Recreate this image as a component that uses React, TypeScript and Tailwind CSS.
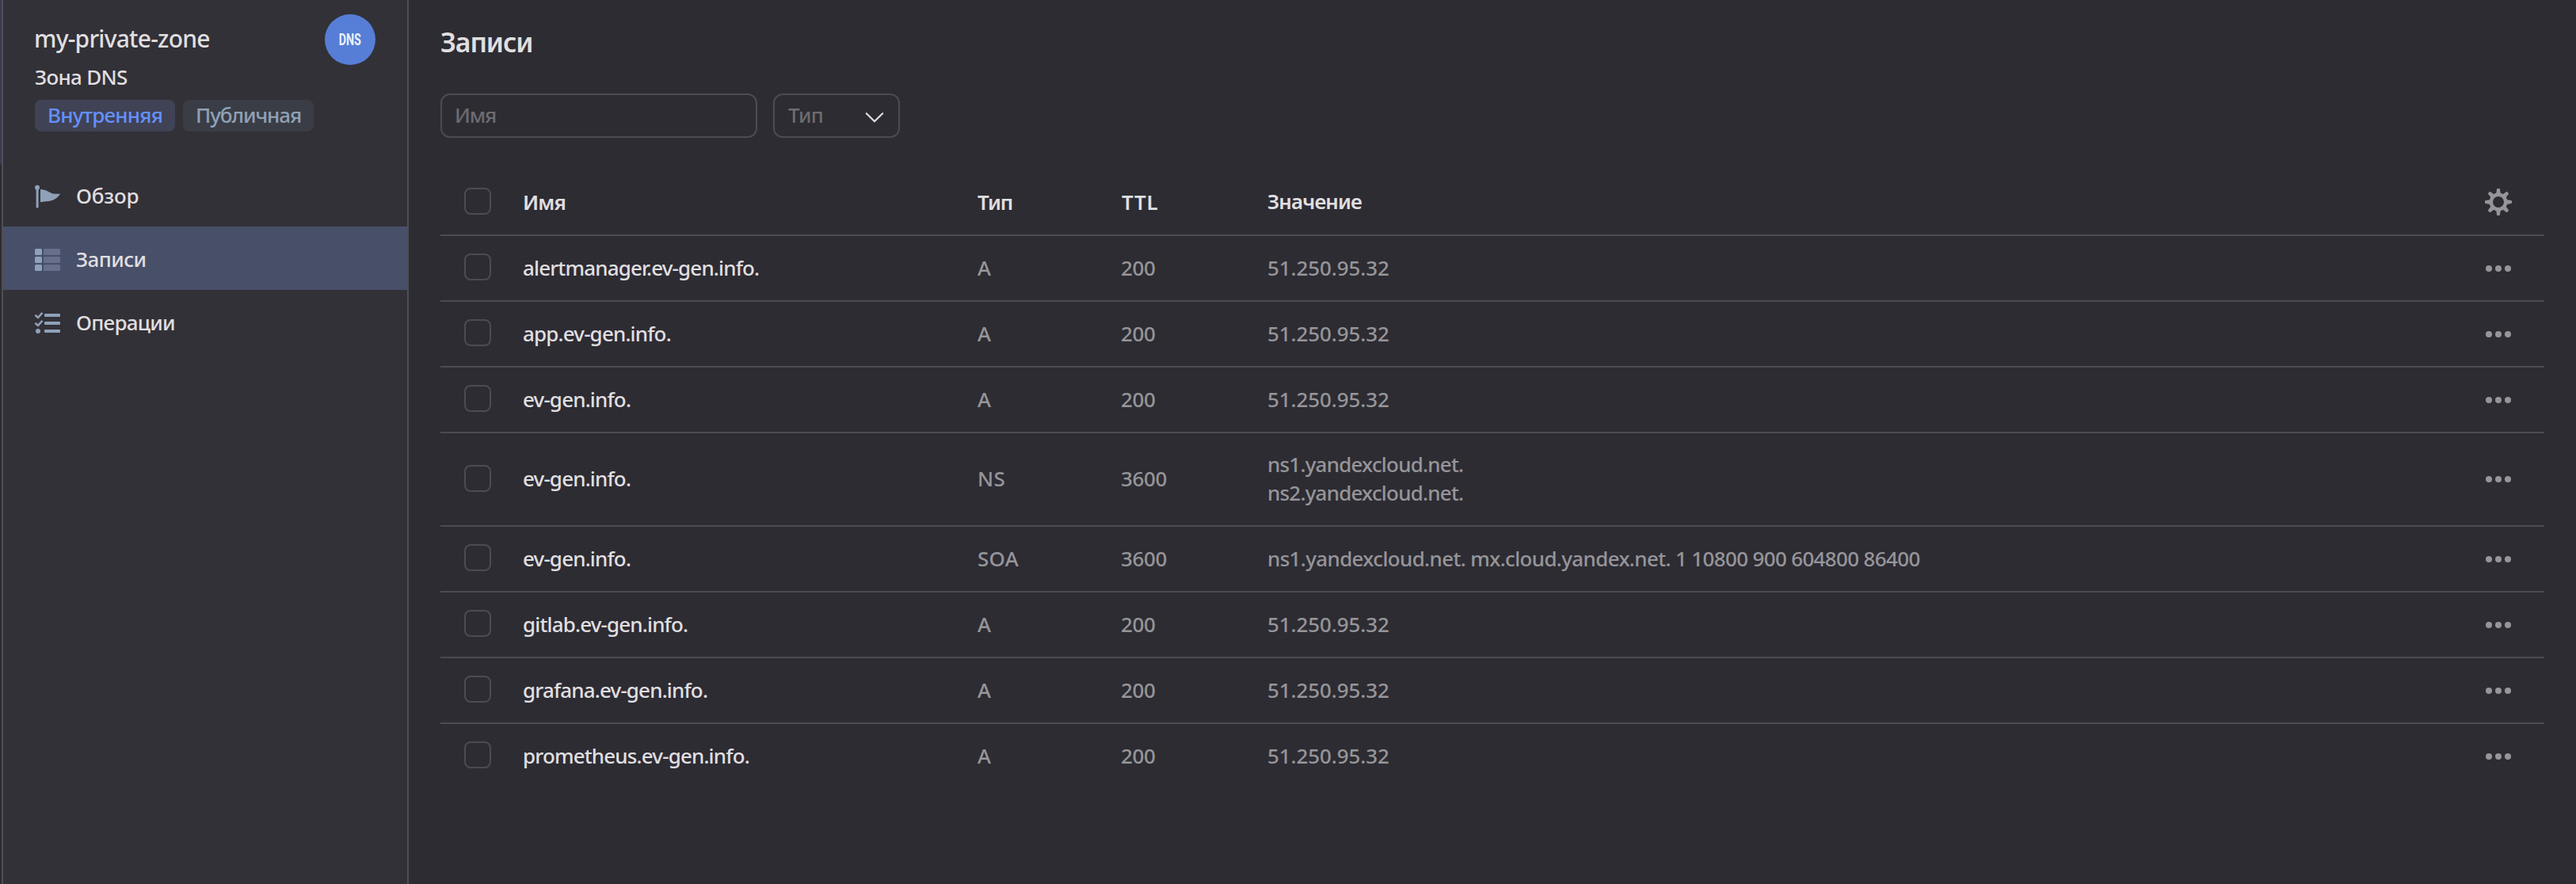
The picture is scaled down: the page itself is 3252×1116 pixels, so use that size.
import React from 'react';

type Row = { name: string; type: string; ttl: number; values: string[]; tracking?: string };

const rows: Row[] = [
  { name: 'alertmanager.ev-gen.info.', type: 'A', ttl: 200, values: ['51.250.95.32'] },
  { name: 'app.ev-gen.info.', type: 'A', ttl: 200, values: ['51.250.95.32'] },
  { name: 'ev-gen.info.', type: 'A', ttl: 200, values: ['51.250.95.32'] },
  { name: 'ev-gen.info.', type: 'NS', ttl: 3600, values: ['ns1.yandexcloud.net.', 'ns2.yandexcloud.net.'], tracking: 'tracking-[-0.8px]' },
  {
    name: 'ev-gen.info.',
    type: 'SOA',
    ttl: 3600,
    values: ['ns1.yandexcloud.net. mx.cloud.yandex.net. 1 10800 900 604800 86400'],
    tracking: 'tracking-[-0.66px]',
  },
  { name: 'gitlab.ev-gen.info.', type: 'A', ttl: 200, values: ['51.250.95.32'] },
  { name: 'grafana.ev-gen.info.', type: 'A', ttl: 200, values: ['51.250.95.32'] },
  { name: 'prometheus.ev-gen.info.', type: 'A', ttl: 200, values: ['51.250.95.32'] },
];

const GRID = 'grid grid-cols-[74px_574px_181px_185px_1fr_116px] items-center pl-[30px] pb-[23px]';

function FlagIcon() {
  return (
    <svg width="32" height="32" viewBox="0 0 32 32" fill="#8fa1b8" className="overflow-visible">
      <circle cx="3" cy="6.8" r="3" />
      <rect x="1.6" y="8" width="3" height="24.400" rx="1" />
      <path d="M7 9C14 9.2 17.5 12.6 22 14.3C25 15.2 28.500 14.700 32 14.900C29 19 25.500 21.800 21 23.200C16.500 24.400 11.500 24.100 7 25.200Z" />
    </svg>
  );
}

function ListIcon() {
  return (
    <svg width="32" height="32" viewBox="0 0 32 32">
      {[4, 14, 24].map((y) => (
        <g key={y}>
          <rect x="0" y={y} width="9" height="8" rx="1.5" fill="#8fa1b8" />
          <rect x="11" y={y} width="21" height="8" rx="1.5" fill="#676f8a" />
        </g>
      ))}
    </svg>
  );
}

function ChecksIcon() {
  return (
    <svg width="32" height="32" viewBox="0 0 32 32" fill="#8fa1b8">
      <path d="M1.300 8.500L4 11L8.800 5.600M1.300 18.500L4 21L8.800 15.600" fill="none" stroke="#8fa1b8" strokeWidth="2.600" strokeLinecap="round" />
      <circle cx="4" cy="28" r="3" />
      {[6, 16, 26].map((y) => (
        <rect key={y} x="12" y={y} width="20" height="4" rx="1" />
      ))}
    </svg>
  );
}

function GearIcon() {
  return (
    <svg width="34" height="34" viewBox="-17 -17 34 34" className="overflow-visible">
      <circle r="9.200" fill="none" stroke="#969599" strokeWidth="4.400" />
      {[0, 45, 90, 135, 180, 225, 270, 315].map((a) => (
        <path
          key={a}
          transform={`rotate(${a})`}
          d="M-4.600 -9.800C-3 -10.600 -2.500 -11.500 -2.400 -13L-2.100 -15.800Q-2 -17 -1 -17H1Q2 -17 2.100 -15.800L2.400 -13C2.500 -11.500 3 -10.600 4.600 -9.800Z"
          fill="#969599"
        />
      ))}
    </svg>
  );
}

function Dots() {
  return (
    <svg width="32" height="8" viewBox="0 0 32 8" fill="#969599">
      <circle cx="4" cy="4" r="4" />
      <circle cx="16" cy="4" r="4" />
      <circle cx="28" cy="4" r="4" />
    </svg>
  );
}

function Checkbox({ className = '' }: { className?: string }) {
  return <span className={`block size-[34px] rounded-lg border-2 border-[#4c4b51] ${className}`} />;
}

function NavItem({ icon, label, active, tracking = '' }: { icon: React.ReactNode; label: string; active?: boolean; tracking?: string }) {
  return (
    <a className={`flex h-20 items-center gap-5 pl-10 ${active ? 'bg-[#484f68]' : ''}`}>
      {icon}
      <span className={`pt-0.5 ${tracking}`}>{label}</span>
    </a>
  );
}

export default function App() {
  return (
    <div className="flex h-[1116px] w-[3252px] overflow-hidden bg-[#2d2c33] font-['Noto_Sans',sans-serif] text-[26px] leading-[36px] font-medium text-[#e0dfe0]">
      <div className="w-0.5 shrink-0">
        <div className="h-[208px] rounded-br-sm bg-[#3a3b52]" />
      </div>

      <aside className="flex w-[514px] shrink-0 flex-col border-x-2 border-[#4f4e53] bg-[#323137]">
        <header className="flex h-[206px] justify-between pr-10 pl-10">
          <div className="pt-[29px]">
            <div className="-ml-px text-[30px] leading-[40px] tracking-[-0.77px]">my-private-zone</div>
            <div className="mt-2.5 tracking-[-0.68px]">Зона DNS</div>
            <div className="mt-[11px] flex gap-2.5">
              <span className="flex h-10 w-[177px] items-center rounded-lg bg-[#404255] pb-0.5 pl-4 tracking-[-0.79px] text-[#6490ff]">
                Внутренняя
              </span>
              <span className="flex h-10 w-[165px] items-center rounded-lg bg-[#3a3d45] pb-0.5 pl-4 tracking-[-1.07px] text-[#8fa1b8]">
                Публичная
              </span>
            </div>
          </div>
          <div className="mt-[18px] flex size-16 items-center justify-center rounded-full bg-[#567ed6]">
            <span className="block scale-x-[0.68] font-['Roboto',sans-serif] text-[21px] font-bold text-[#eaf0fb]">DNS</span>
          </div>
        </header>
        <nav>
          <NavItem icon={<FlagIcon />} label="Обзор" tracking="tracking-[-0.2px]" />
          <NavItem icon={<ListIcon />} label="Записи" active tracking="tracking-[-0.6px]" />
          <NavItem icon={<ChecksIcon />} label="Операции" tracking="tracking-[-0.73px]" />
        </nav>
      </aside>

      <main className="flex-1 pt-[30px] pr-10 pl-10">
        <h1 className="text-[34px] leading-[46px] font-semibold tracking-[-1.12px]">Записи</h1>

        <div className="mt-[42px] flex gap-5">
          <div className="flex h-14 w-[400px] items-center rounded-xl border-2 border-[#4c4b51] pb-0.5 pl-4 tracking-[-1.2px] text-[#6c6b70]">
            Имя
          </div>
          <div className="flex h-14 w-40 items-center justify-between rounded-xl border-2 border-[#4c4b51] pr-[18px] pl-[17px] text-[#6c6b70]">
            <span className="pb-0.5 tracking-[-0.8px]">Тип</span>
            <svg width="24" height="14" viewBox="0 0 24 14" className="mt-[3px]" fill="none" stroke="#e0dfe0" strokeWidth="2.200" strokeLinecap="round">
              <path d="M1.800 2.200L12 12.200L22.200 2.200" />
            </svg>
          </div>
        </div>

        <div className="mt-10">
          <div className={`${GRID} border-b-2 border-[#4c4b51] pt-[23px] font-semibold`}>
            <Checkbox className="mb-0.5" />
            <span className="tracking-[-0.9px]">Имя</span>
            <span className="tracking-[-1.1px]">Тип</span>
            <span className="pl-px tracking-[0.7px]">TTL</span>
            <span className="-mt-0.5 tracking-[-0.93px]">Значение</span>
            <span className="flex justify-center">
              <GearIcon />
            </span>
          </div>
          {rows.map((row, i) => {
            const tall = row.values.length > 1;
            return (
              <div
                key={i}
                className={`${GRID} ${tall ? 'pt-[21px]' : 'pt-[22px]'} ${i < rows.length - 1 ? 'border-b-2 border-[#4c4b51]' : ''}`}
              >
                <Checkbox className={tall ? '' : 'mb-0.5'} />
                <span className="tracking-[-0.86px]">{row.name}</span>
                <span className="tracking-[0.3px] text-[#969599]">{row.type}</span>
                <span className="tracking-[-0.4px] text-[#969599]">{row.ttl}</span>
                <span className={`text-[#969599] ${row.tracking ?? 'tracking-[-0.1px]'}`}>
                  {row.values.map((v) => (
                    <span key={v} className="block whitespace-nowrap">
                      {v}
                    </span>
                  ))}
                </span>
                <span className="mt-0.5 flex justify-center">
                  <Dots />
                </span>
              </div>
            );
          })}
        </div>
      </main>
    </div>
  );
}
